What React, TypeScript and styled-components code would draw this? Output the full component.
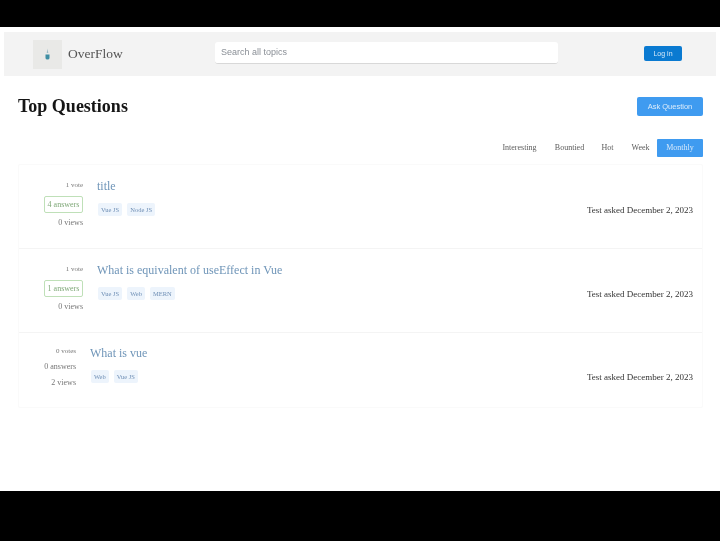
import React, { FC } from "react";
import styled, { createGlobalStyle } from "styled-components";

const GlobalStyle = createGlobalStyle`
    html, body {
        margin: 0;
        padding: 0;
        background: #000;
    }
`;

const Screen = styled.div`
    width: 720px;
    height: 541px;
    overflow: hidden;
    background: #000;
    display: flex;
    flex-direction: column;
    padding: 27px 0 50px;
    box-sizing: border-box;
`;

const Page = styled.div`
    flex: 1;
    background: #fff;
    padding: 5px 4px 0;
    box-sizing: border-box;
    font-family: "Liberation Serif", serif;
    filter: blur(0.7px);
`;

const Navbar = styled.header`
    height: 44px;
    background: #f3f3f3;
    display: flex;
    align-items: center;
    padding: 0 34px 0 29px;
`;

const Brand = styled.div`
    display: flex;
    align-items: center;
    gap: 6px;
    width: 182px;
    flex-shrink: 0;
`;

const LogoBox = styled.div`
    width: 29px;
    height: 29px;
    background: #e9e9e7;
    display: flex;
    align-items: center;
    justify-content: center;
`;

const BrandName = styled.span`
    font-size: 13.5px;
    color: #555;
`;

const Search = styled.div`
    width: 343px;
    height: 22px;
    margin-top: -2px;
    background: #fff;
    border-bottom: 1px solid #d8d8d8;
    border-radius: 3px;
    box-sizing: border-box;
    padding: 0 0 2px 6px;
    display: flex;
    align-items: center;
    font-family: "Liberation Sans", sans-serif;
    font-size: 9px;
    color: #8a8f96;
`;

const LoginButton = styled.button`
    margin-left: auto;
    margin-top: -1px;
    width: 38px;
    height: 15px;
    padding: 0;
    border: 0;
    border-radius: 2px;
    background: #0a7ad1;
    color: #d5e9f8;
    font-family: "Liberation Sans", sans-serif;
    font-size: 7px;
`;

const Main = styled.main`
    padding: 0 13px 0 14px;
`;

const Heading = styled.div`
    display: flex;
    align-items: center;
    justify-content: space-between;
    padding-top: 20px;
`;

const Title = styled.h1`
    margin: 0;
    font-size: 18px;
    line-height: 20px;
    font-weight: 700;
    color: #151515;
`;

const AskButton = styled.button`
    width: 66px;
    height: 19px;
    padding: 0;
    border: 0;
    border-radius: 2px;
    background: #3f9bf0;
    color: #dcecfb;
    font-family: "Liberation Sans", sans-serif;
    font-size: 7.5px;
`;

const Tabs = styled.nav`
    display: flex;
    justify-content: flex-end;
    margin-top: 23px;
`;

const Tab = styled.div<{ $active?: boolean; $width: number }>`
    height: 18px;
    line-height: 18px;
    width: ${(p) => p.$width}px;
    text-align: center;
    font-size: 8px;
    border-radius: 1px;
    background: ${(p) => (p.$active ? "#3f9bf0" : "transparent")};
    color: ${(p) => (p.$active ? "#d7e9fb" : "#5c5c5c")};
`;

const List = styled.section`
    margin-top: 7px;
    border: 1px solid #fafafa;
    border-radius: 2px;
`;

const Row = styled.article<{ $height: number; $tight?: boolean }>`
    height: ${(p) => p.$height}px;
    display: flex;
    padding: ${(p) => (p.$tight ? 13 : 14)}px 9px 0 25px;
    box-sizing: border-box;
    border-bottom: 1px solid #f4f4f4;

    &:last-child {
        border-bottom: 0;
    }
`;

const Stats = styled.div<{ $width: number; $tight?: boolean }>`
    width: ${(p) => p.$width}px;
    flex-shrink: 0;
    margin-top: ${(p) => (p.$tight ? -2 : 0)}px;
    display: flex;
    flex-direction: column;
    align-items: flex-end;
    font-size: 8px;
    color: #777;
`;

const Stat = styled.span<{ $plain?: boolean }>`
    height: ${(p) => (p.$plain ? 15 : 12)}px;
    line-height: ${(p) => (p.$plain ? 15 : 12)}px;
`;

const Votes = styled(Stat)`
    font-size: 7px;
`;

const Answers = styled.span<{ $boxed?: boolean }>`
    height: ${(p) => (p.$boxed ? 15 : 16)}px;
    line-height: ${(p) => (p.$boxed ? 15 : 16)}px;
    width: ${(p) => (p.$boxed ? "37px" : "auto")};
    text-align: center;
    margin: ${(p) => (p.$boxed ? "5px 0 4px" : "0")};
    border: ${(p) => (p.$boxed ? "1px solid #bfe0b8" : "0")};
    border-radius: 2px;
    color: ${(p) => (p.$boxed ? "#7fa878" : "#777")};
`;

const Body = styled.div`
    flex: 1;
    padding-left: 14px;
`;

const QuestionTitle = styled.a`
    display: block;
    height: 18px;
    line-height: 14px;
    font-size: 12px;
    color: #6f95b8;
`;

const TagRow = styled.div`
    display: flex;
    gap: 5px;
    margin: 6px 0 0 1px;
`;

const Tag = styled.span`
    height: 13px;
    line-height: 13px;
    padding: 0 3px;
    font-size: 6.5px;
    color: #6f8fb5;
    background: #edf4fc;
    border-radius: 2px;
`;

const Meta = styled.div`
    margin-top: 25px;
    font-size: 9px;
    line-height: 12px;
    color: #333;
    white-space: nowrap;
`;

type Question = {
    title: string;
    votes: string;
    answers: string;
    views: string;
    tags: string[];
    answered: boolean;
    statsWidth: number;
    height: number;
};

const questions: Question[] = [
    {
        title: "title",
        votes: "1 vote",
        answers: "4 answers",
        views: "0 views",
        tags: ["Vue JS", "Node JS"],
        answered: true,
        statsWidth: 39,
        height: 84,
    },
    {
        title: "What is equivalent of useEffect in Vue",
        votes: "1 vote",
        answers: "1 answers",
        views: "0 views",
        tags: ["Vue JS", "Web", "MERN"],
        answered: true,
        statsWidth: 39,
        height: 84,
    },
    {
        title: "What is vue",
        votes: "0 votes",
        answers: "0 answers",
        views: "2 views",
        tags: ["Web", "Vue JS"],
        answered: false,
        statsWidth: 32,
        height: 74,
    },
];

const tabs = [
    { label: "Interesting", width: 57 },
    { label: "Bountied", width: 43 },
    { label: "Hot", width: 33 },
    { label: "Week", width: 33 },
    { label: "Monthly", width: 46, active: true },
];

const App: FC = () => (
    <Screen>
        <GlobalStyle />
        <Page>
            <Navbar>
                <Brand>
                    <LogoBox>
                        <svg width="7" height="12" viewBox="0 0 7 12">
                            <path d="M3.5 0.5 L4.3 5 H2.7 Z" fill="#9dbcc6" />
                            <path d="M1.5 6.5 H5.5 V10 Q5.5 11.5 3.5 11.5 Q1.5 11.5 1.5 10 Z" fill="#3f8ea3" />
                        </svg>
                    </LogoBox>
                    <BrandName>OverFlow</BrandName>
                </Brand>
                <Search>Search all topics</Search>
                <LoginButton>Log in</LoginButton>
            </Navbar>
            <Main>
                <Heading>
                    <Title>Top Questions</Title>
                    <AskButton>Ask Question</AskButton>
                </Heading>
                <Tabs>
                    {tabs.map((t) => (
                        <Tab key={t.label} $active={t.active} $width={t.width}>
                            {t.label}
                        </Tab>
                    ))}
                </Tabs>
                <List>
                    {questions.map((q) => (
                        <Row key={q.title} $height={q.height} $tight={!q.answered}>
                            <Stats $width={q.statsWidth} $tight={!q.answered}>
                                <Votes $plain={!q.answered}>{q.votes}</Votes>
                                <Answers $boxed={q.answered}>{q.answers}</Answers>
                                <Stat $plain={!q.answered}>{q.views}</Stat>
                            </Stats>
                            <Body>
                                <QuestionTitle>{q.title}</QuestionTitle>
                                <TagRow>
                                    {q.tags.map((tag) => (
                                        <Tag key={tag}>{tag}</Tag>
                                    ))}
                                </TagRow>
                            </Body>
                            <Meta>Test asked December 2, 2023</Meta>
                        </Row>
                    ))}
                </List>
            </Main>
        </Page>
    </Screen>
);

export default App;
